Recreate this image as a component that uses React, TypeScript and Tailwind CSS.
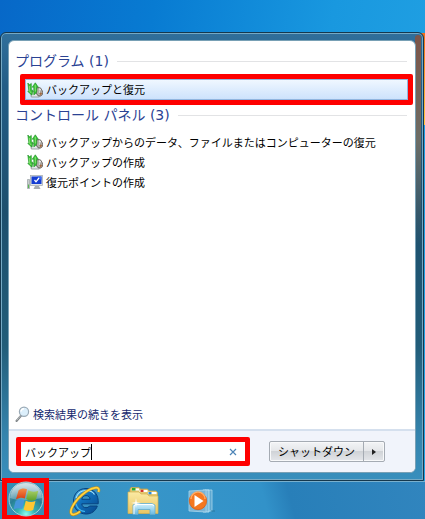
import { useState } from "react"

function BackupIcon() {
  return (
    <svg viewBox="0 0 16 16" className="size-4 shrink-0" aria-hidden="true">
      <path d="M3.500 9.500l.8 5.500h8l-1-5.500z" fill="#e3e7e9" stroke="#8b9296" strokeWidth=".8" />
      <ellipse cx="12.200" cy="9.800" rx="3.200" ry="4.400" fill="#b5b0aa" stroke="#6d6965" strokeWidth=".9" transform="rotate(-18 12.200 9.800)" />
      <path d="M12 10l.2-4 2 1.500z" fill="#ededed" />
      <path d="M12.300 10l2.800 1-1.400 3z" fill="#a66a3e" />
      <circle cx="12.300" cy="10" r="1.100" fill="#fff" stroke="#777" strokeWidth=".5" />
      <path d="M.8 1l1.800 1.800L4.300 1.400v6.800h1.500L5 13.200.8 9.500l1-1z" fill="#3cc338" stroke="#168c1c" strokeWidth=".6" />
      <path d="M2.600 4v5l1.600 2" fill="none" stroke="#98ea82" strokeWidth=".8" />
      <path d="M6.800 12.800V5.200H5.200L8.300.8l3 4.400H9.800v3.300c0 2-1.200 3.500-3 4.300z" fill="#3cc338" stroke="#168c1c" strokeWidth=".6" />
      <path d="M8.300 2.800V9.500" stroke="#98ea82" strokeWidth=".8" />
    </svg>
  )
}

function RestorePointIcon() {
  return (
    <svg viewBox="0 0 16 16" className="size-4 shrink-0" aria-hidden="true">
      <path d="M.5 5.500h2v9h-2z" fill="#c8cdcf" stroke="#8c9497" strokeWidth=".6" />
      <path d="M1 10.500h1V14H1z" fill="#58b951" />
      <rect x="3.500" y="1.500" width="12" height="10" fill="#dfe3e6" stroke="#a0a7ad" strokeWidth=".7" />
      <rect x="4.500" y="2.500" width="10" height="7.500" fill="#143cd2" />
      <path d="M10 2.500h4.500v4z" fill="#3b6bf0" />
      <path d="M7.500 6l1.500 1.800 3-3.800" fill="none" stroke="#fff" strokeWidth="1.300" />
      <path d="M8 12h4l1.500 3h-7z" fill="#a8adb0" />
    </svg>
  )
}

function SearchIcon() {
  return (
    <svg viewBox="0 0 16 16" className="size-4 shrink-0" aria-hidden="true">
      <path d="M1.500 15l4.700-5.500" stroke="#7f8588" strokeWidth="2" strokeLinecap="round" />
      <path d="M1.800 14.300l4-4.800" stroke="#d0d3d5" strokeWidth=".7" />
      <circle cx="9" cy="5.800" r="4.600" fill="#dceffb" stroke="#9aaab6" strokeWidth="1.200" />
      <path d="M6 5.500a3 3 0 013-2.700" fill="none" stroke="#fff" strokeWidth="1.500" />
    </svg>
  )
}

function StartOrb() {
  return (
    <svg viewBox="0 0 36 36" className="size-9" aria-hidden="true">
      <defs>
        <radialGradient id="orb" cx="50%" cy="95%" r="85%">
          <stop offset="0" stopColor="#8bffed" />
          <stop offset=".3" stopColor="#35b3b3" />
          <stop offset=".65" stopColor="#287f96" />
          <stop offset="1" stopColor="#6fa3b5" />
        </radialGradient>
        <linearGradient id="gloss" x2="0" y2="1">
          <stop offset="0" stopColor="#fff" stopOpacity=".7" />
          <stop offset="1" stopColor="#fff" stopOpacity=".2" />
        </linearGradient>
        <linearGradient id="flagRed" x2="0" y2="1">
          <stop offset="0" stopColor="#f58b45" />
          <stop offset="1" stopColor="#d93a12" />
        </linearGradient>
        <linearGradient id="flagGreen" x2="0" y2="1">
          <stop offset="0" stopColor="#a9cf68" />
          <stop offset="1" stopColor="#5da02a" />
        </linearGradient>
      </defs>
      <circle cx="18" cy="18" r="17" fill="url(#orb)" stroke="#a8d3db" strokeWidth="1" />
      <path d="M2 17C3 7 9 2 18 2s15 5 16 15c-9 2-22 4-32 0z" fill="url(#gloss)" />
      <path d="M10.500 9.500c2.500-2 5.500-2.500 8.500-1.200l-2.200 9.200c-3-1.300-5.600-.9-8.800.8z" fill="url(#flagRed)" />
      <path d="M20.300 9.300c3 1.800 6.200 1.800 10 .4L28 18.500c-3.400 1.700-6.500 1.400-9.800-.4z" fill="url(#flagGreen)" />
      <path d="M7.700 19.800c3-1.700 5.700-2 8.700-.8L14.200 28c-3-1.200-5.700-1-8.700.6z" fill="#4596dc" />
      <path d="M17.800 19.700c3.200 1.700 6.300 1.900 9.700.4L25.200 29c-3.300 1.500-6.500 1.300-9.600-.6z" fill="#fdc733" />
    </svg>
  )
}

function ExplorerIcon() {
  return (
    <svg viewBox="0 0 32 30" className="h-[30px] w-8" aria-hidden="true">
      <defs>
        <linearGradient id="ie" x1="0" y1="0" x2="1" y2="1">
          <stop offset="0" stopColor="#5cc0ee" />
          <stop offset=".4" stopColor="#1272bd" />
          <stop offset="1" stopColor="#06468c" />
        </linearGradient>
      </defs>
      <path
        fillRule="evenodd"
        d="M17 2.500C9.500 2.500 4.500 8 4.500 15.200S9.500 28 17 28c5.500 0 9.700-3 11.300-8h-7.800c-.8 1.200-2 1.700-3.500 1.700-2.500 0-4-1.400-4.200-3.900h16.400C30 9 25 2.500 17 2.500zm-4.200 10.800c.4-2.300 1.900-3.700 4.300-3.700 2.300 0 3.800 1.400 4 3.700z"
        fill="url(#ie)" stroke="#07427f" strokeWidth="1"
      />
      <path d="M7 12C8.500 7 12.500 4.500 17 4.500c4 0 7 1.500 8.500 4" fill="none" stroke="#a5e4fa" strokeWidth="1.200" />
      <path d="M7 18c1 4 4 7 9 7.500" fill="none" stroke="#40b6ee" strokeWidth="1.200" />
      <path d="M29.500 6c1-3 0-4.700-3.500-4.200C18 2.800 7 13 3 21.500c-2 4.300-1.500 7.500 2 7 1.800-.3 4-1.500 6.200-3.200" fill="none" stroke="#c68f15" strokeWidth="2.800" />
      <path d="M29.500 6c1-3 0-4.700-3.500-4.200C18 2.800 7 13 3 21.500c-2 4.300-1.500 7.500 2 7 1.800-.3 4-1.500 6.200-3.200" fill="none" stroke="#ffd441" strokeWidth="1.700" />
    </svg>
  )
}

function FolderIcon() {
  return (
    <svg viewBox="0 0 32 28" className="h-7 w-8" aria-hidden="true">
      <defs>
        <linearGradient id="folder" x2="0" y2="1">
          <stop offset="0" stopColor="#fbeaa4" />
          <stop offset="1" stopColor="#e8c565" />
        </linearGradient>
        <linearGradient id="tray" x2="0" y2="1">
          <stop offset="0" stopColor="#d6f3ff" />
          <stop offset="1" stopColor="#69b8df" />
        </linearGradient>
      </defs>
      <path d="M3 2l1-1.500h8l1.500 1.500h7L22 4h7l1.500 1.500V26H3z" fill="#e3c870" stroke="#c9a849" strokeWidth=".7" />
      <path d="M5 1.500h7v2H5z" fill="#fff" />
      <path d="M5 1h3.500v2.500H5z" fill="#28aa32" />
      <path d="M12.500 3h8v2h-8z" fill="#fff" />
      <path d="M13.500 2.700h3v2.300h-3z" fill="#d53425" />
      <path d="M21 5h8.500v2H21z" fill="#fff" />
      <path d="M21.500 5h3v2.300h-3z" fill="#288bdc" />
      <path d="M1 5h11l2 2h6l2 2h9v17.500H1z" fill="url(#folder)" stroke="#d2b252" strokeWidth=".7" />
      <path d="M6 27.500V18l3-1.500h16l3 1.500v9.500h-5v-5H11v5z" fill="url(#tray)" stroke="#5fadd4" strokeWidth=".8" />
      <path d="M7 27v-8.500l2-1h16l2 1" fill="none" stroke="#fff" strokeWidth="1" />
      <path d="M9 11l.7 4.300L14 16l-4.300.7L9 21l-.7-4.300L4 16l4.300-.7z" fill="#fff" />
    </svg>
  )
}

function MediaIcon() {
  return (
    <svg viewBox="0 0 28 24" className="h-6 w-7" aria-hidden="true">
      <path d="M17 1h7v21h-7z" fill="#5fa8d1" stroke="#a9d8ee" strokeWidth=".8" />
      <path d="M15 1h6v22h-6z" fill="#7cbbdc" stroke="#c3e7f6" strokeWidth=".8" />
      <path d="M1 2l17-1v22L1 22z" fill="#79b4d6" stroke="#a9d6eb" strokeWidth=".8" />
      <path d="M23 22h4" stroke="#28799f" strokeWidth="1" />
      <circle cx="10" cy="12" r="8.700" fill="#f47720" stroke="#d95810" strokeWidth=".7" />
      <path d="M3 10a7 7 0 0114 0" fill="none" stroke="#ffab63" strokeWidth="1.500" />
      <path d="M6.500 6L15.500 12l-9 6z" fill="#fff" />
    </svg>
  )
}

function SectionTitle({ children }: { children: string }) {
  return (
    <div className="flex h-6 items-center gap-2 pr-2 pl-1.5">
      <h2 className="font-['DejaVu_Sans','Noto_Sans_CJK_JP',sans-serif] text-sm font-normal whitespace-nowrap text-[#2b4293]">
        {children}
      </h2>
      <span className="h-px flex-1 bg-[#e2e3e5]" />
    </div>
  )
}

const controlPanelItems = [
  { label: "バックアップからのデータ、ファイルまたはコンピューターの復元", Icon: BackupIcon },
  { label: "バックアップの作成", Icon: BackupIcon },
  { label: "復元ポイントの作成", Icon: RestorePointIcon },
]

export default function App() {
  const [query, setQuery] = useState("バックアップ")

  return (
    <div className="relative flex min-h-screen flex-col bg-[linear-gradient(100deg,#0768c8_0%,#087bd2_30%,#1998df_65%,#24a4e4_100%)] pt-8 font-['Noto_Sans_CJK_JP',sans-serif] text-[11px] text-black">
      {/* sliver of the wallpaper logo beside the menu */}
      <div className="absolute top-[33px] right-0 h-[92px] w-1 bg-gradient-to-b from-[#ef6c18] to-[#ffc43c]" />

      <main className="relative mr-px flex flex-1 flex-col rounded-t-md border border-[#15384e] bg-[linear-gradient(to_bottom,#306f9b_0%,#235d86_12%,#1d4f6d_40%,#225d79_70%,#3584ad_90%,#388fbd_100%)] p-[7px] shadow-[inset_0_0_0_1px_#75a9c4]">
        <div className="absolute top-0.5 right-0.5 h-[210px] w-1.5 rounded-t-md bg-gradient-to-b from-[#7c5448] via-[#6c6d66] to-transparent" />
        <div className="relative flex flex-1 flex-col overflow-hidden rounded-md border border-[#78a0b5] bg-white">
          <section className="pt-2">
            <SectionTitle>プログラム (1)</SectionTitle>
            <button className="mt-px ml-[11px] flex h-[31px] w-[calc(100%-13px)] items-center gap-[3px] rounded-xs border-[5px] border-[#fe0000] bg-gradient-to-b from-[#f1f8ff] to-[#cbe1fc] pl-0.5 text-left shadow-[inset_0_0_0_1px_#91b5df]">
              <BackupIcon />
              バックアップと復元
            </button>
          </section>

          <section className="-mt-0.5">
            <SectionTitle>コントロール パネル (3)</SectionTitle>
            <ul className="mt-[5px]">
              {controlPanelItems.map(({ label, Icon }) => (
                <li key={label}>
                  <button className="flex h-5 w-full items-center gap-[3px] pl-[18px] text-left whitespace-nowrap">
                    <Icon />
                    {label}
                  </button>
                </li>
              ))}
            </ul>
          </section>

          <a href="#results" className="mt-auto flex h-[30px] items-center gap-0.5 pl-1.5 text-[#14286e]">
            <SearchIcon />
            検索結果の続きを表示
          </a>

          <div className="flex h-[43px] items-center border-t-2 border-[#d5e0ee] bg-[#f1f4fb] pr-[30px] pl-[7px]">
            <div className="flex h-[29px] flex-1 items-center rounded-xs border-[5px] border-[#fe0000] bg-white pr-2 pl-1">
              <div className="relative min-w-0 flex-1">
                <input
                  aria-label="プログラムとファイルの検索"
                  value={query}
                  onChange={(e) => setQuery(e.target.value)}
                  className="block w-full bg-transparent text-[11px] leading-4 outline-none"
                />
                {query === "バックアップ" && (
                  <span className="pointer-events-none absolute top-0 left-0 flex">
                    <span className="invisible">{query}</span>
                    <span className="h-4 w-px bg-black" />
                  </span>
                )}
              </div>
              <button aria-label="検索をクリア" onClick={() => setQuery("")}>
                <svg viewBox="0 0 8 8" className="size-2">
                  <path d="M1 1l6 6M7 1L1 7" stroke="#4c84b7" strokeWidth="1.200" />
                </svg>
              </button>
            </div>
            <div className="ml-[19px] flex h-[21px] rounded-xs border border-[#a5abb3] bg-[linear-gradient(to_bottom,#f3f4f6_0%,#e4e6e9_48%,#d0d3d7_50%,#e4e6ea_100%)] shadow-[inset_0_0_0_1px_#f8f9fa]">
              <button className="w-[93px] text-center whitespace-nowrap">シャットダウン</button>
              <button aria-label="シャットダウンのオプション" className="flex w-[21px] items-center justify-center border-l border-[#a5abb3]">
                <svg viewBox="0 0 4 6" className="h-1.5 w-1">
                  <path d="M0 0l4 3-4 3z" fill="#222" />
                </svg>
              </button>
            </div>
          </div>
        </div>
      </main>

      <nav className="relative flex h-[38px] items-center border-t border-[#79b0ce] bg-[linear-gradient(75deg,#398db8_0%,#3795c8_35%,#3292c9_62%,#287fb9_68%,#3185be_100%)]">
        <button aria-label="スタート" className="z-10 ml-0.5 flex h-[42px] w-[47px] -translate-y-0.5 items-center justify-center border-[5px] border-[#fe0000] bg-[#358eb5]">
          <StartOrb />
        </button>
        <button aria-label="Internet Explorer" className="ml-5"><ExplorerIcon /></button>
        <button aria-label="エクスプローラー" className="ml-[26px]"><FolderIcon /></button>
        <button aria-label="Windows Media Player" className="ml-[29px]"><MediaIcon /></button>
      </nav>
    </div>
  )
}
